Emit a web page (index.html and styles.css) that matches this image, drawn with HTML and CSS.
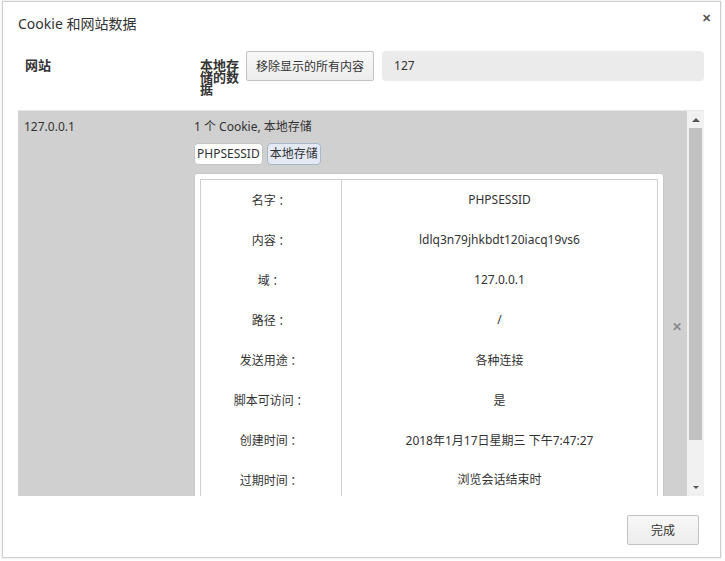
FILE: index.html
```html
<!DOCTYPE html>
<html lang="zh-CN">

<head>
	<title>Cookie 和网站数据</title>
	<meta charset="utf-8">
	<meta name="viewport" content="width=device-width, initial-scale=1.0">
	<link rel="stylesheet" href="styles.css">
</head>

<body>

	<div class="dialog">

		<!-- title bar -->
		<div class="title-bar">
			<h1 class="title">Cookie 和网站数据</h1>
			<span class="close">&#x2715;</span>
		</div>

		<!-- column headers and search -->
		<div class="toolbar">
			<div class="head-site">网站</div>
			<div class="head-data">本地存储的数据</div>
			<button class="btn">移除显示的所有内容</button>
			<div class="search">127</div>
		</div>

		<!-- site list -->
		<div class="list">
			<div class="list-body">
				<div class="site-row">
					<div class="site-name">127.0.0.1</div>
					<div class="site-data">
						<div class="summary">1 个 Cookie, 本地存储</div>
						<div class="chips">
							<span class="chip">PHPSESSID</span>
							<span class="chip chip-active">本地存储</span>
						</div>
						<div class="details">
							<table class="detail-table">
								<tr><td class="label">名字 ：</td><td>PHPSESSID</td></tr>
								<tr><td class="label">内容 ：</td><td>ldlq3n79jhkbdt120iacq19vs6</td></tr>
								<tr><td class="label">域 ：</td><td>127.0.0.1</td></tr>
								<tr><td class="label">路径 ：</td><td>/</td></tr>
								<tr><td class="label">发送用途 ：</td><td>各种连接</td></tr>
								<tr><td class="label">脚本可访问 ：</td><td>是</td></tr>
								<tr><td class="label">创建时间 ：</td><td>2018年1月17日星期三 下午7:47:27</td></tr>
								<tr><td class="label">过期时间 ：</td><td>浏览会话结束时</td></tr>
							</table>
						</div>
					</div>
					<span class="remove">&#x2715;</span>
				</div>
			</div>

			<!-- scrollbar -->
			<div class="scrollbar">
				<div class="scroll-btn"><span class="arrow-up"></span></div>
				<div class="scroll-track">
					<div class="scroll-thumb"></div>
				</div>
				<div class="scroll-btn"><span class="arrow-down"></span></div>
			</div>
		</div>

		<!-- footer -->
		<div class="footer">
			<button class="btn btn-done">完成</button>
		</div>

	</div>

</body>

</html>
```

FILE: styles.css
```css
/**
 * Base
 */
*,
*:before,
*:after {
	box-sizing: border-box;
}

body {
	background-color: #ffffff;
	color: #333333;
	font-family: "Noto Sans", "Noto Sans CJK SC", sans-serif;
	font-size: 12px;
	margin: 0;
	padding: 1px 4px 2px 2px;
}

/**
 * Dialog
 */
.dialog {
	background-color: #ffffff;
	border: 1px solid #cfcfcf;
	box-shadow: 0 0 2px rgba(0, 0, 0, 0.15);
	display: flex;
	flex-direction: column;
	height: 557px;
}

.title-bar {
	align-items: flex-start;
	display: flex;
	justify-content: space-between;
	padding: 11px 9px 0 15px;
}

.title {
	font-size: 14px;
	font-weight: normal;
	margin: 0;
}

.close {
	color: #555555;
	font-size: 11px;
	font-weight: bold;
	margin-top: -3px;
}

/**
 * Toolbar
 */
.toolbar {
	align-items: flex-start;
	display: flex;
	padding: 18px 16px 0 15px;
}

.head-site {
	font-size: 13px;
	font-weight: bold;
	padding: 4px 0 0 7px;
	width: 182px;
}

.head-data {
	font-size: 13px;
	font-weight: bold;
	line-height: 12px;
	padding-top: 8px;
	width: 46px;
	padding-right: 6px;
}

.btn {
	background: linear-gradient(#f8f8f8, #ececec);
	border: 1px solid #c2c2c2;
	border-radius: 2px;
	color: #333333;
	font-family: inherit;
	font-size: 12px;
	height: 30px;
	padding: 0 9px;
}

.search {
	background-color: #ebebeb;
	border-radius: 4px;
	flex: 1;
	font-size: 12px;
	height: 30px;
	line-height: 30px;
	margin-left: 8px;
	padding-left: 12px;
}

/**
 * List
 */
.list {
	background-color: #d0d0d0;
	border-top: 1px solid #e6e6e6;
	display: flex;
	height: 386px;
	margin: 15px 16px 0 15px;
	overflow: hidden;
}

.list-body {
	flex: 1;
}

.site-row {
	display: flex;
	padding: 7px 0 0 6px;
	position: relative;
}

.site-name {
	width: 170px;
}

.site-data {
	width: 470px;
}

.summary {
	line-height: 17px;
}

.chips {
	display: flex;
	gap: 4px;
	margin-top: 8px;
}

.chip {
	background-color: #ffffff;
	border: 1px solid #c4c4c4;
	border-radius: 4px;
	height: 22px;
	line-height: 20px;
	padding: 0 2px;
}

.chip-active {
	background-color: #e3eaf5;
	border-color: #a9b6c8;
}

.details {
	background-color: #ffffff;
	border: 1px solid #c8c8c8;
	border-radius: 3px;
	margin-top: 8px;
	padding: 5px;
}

.detail-table {
	border: 1px solid #cfcfcf;
	border-collapse: collapse;
	width: 100%;
}

.detail-table td {
	height: 40px;
	text-align: center;
}

.detail-table .label {
	border-right: 1px solid #cfcfcf;
	font-family: "Noto Sans CJK SC", sans-serif;
	width: 141px;
}

.remove {
	color: #8a8a8a;
	font-size: 12px;
	font-weight: bold;
	position: absolute;
	left: 654px;
	top: 207px;
}

/**
 * Scrollbar
 */
.scrollbar {
	background-color: #f1f1f1;
	display: flex;
	flex-direction: column;
	width: 17px;
}

.scroll-btn {
	align-items: center;
	display: flex;
	height: 17px;
	justify-content: center;
}

.arrow-up {
	border-bottom: 4px solid #555555;
	border-left: 4px solid transparent;
	border-right: 4px solid transparent;
}

.arrow-down {
	border-left: 3px solid transparent;
	border-right: 3px solid transparent;
	border-top: 3px solid #555555;
}

.scroll-track {
	flex: 1;
	padding: 0 2px;
}

.scroll-thumb {
	background-color: #c1c1c1;
	height: 312px;
}

/**
 * Footer
 */
.footer {
	display: flex;
	justify-content: flex-end;
	padding: 19px 21px 0 0;
}

.btn-done {
	height: 30px;
	width: 72px;
}
```
